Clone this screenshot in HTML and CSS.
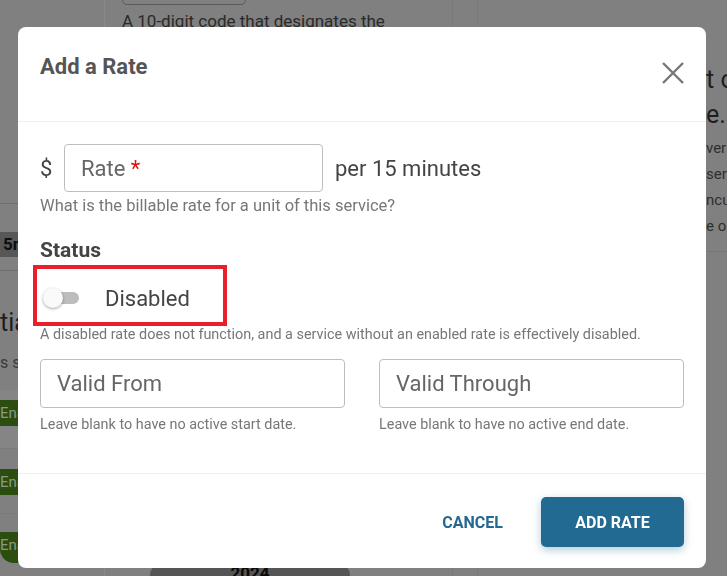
FILE: index.html
```html
<!DOCTYPE html>
<html>
<head>
<meta charset="utf-8">
<link rel="stylesheet" href="styles.css">
</head>
<body>
<div class="page">
  <div class="col col-left">
    <div class="l-line l-line1"></div>
    <div class="chip-gray">5n</div>
    <div class="l-line l-line2"></div>
    <div class="l-big">tia</div>
    <div class="l-small">s s</div>
    <div class="band"><div class="chip-green">Ena</div></div>
    <div class="l-line l-line3"></div>
    <div class="chip-green chip-g2">Ena</div>
    <div class="l-line l-line4"></div>
    <div class="chip-green chip-g3">Ena</div>
  </div>
  <div class="col col-mid">
    <div class="m-input"></div>
    <div class="m-text">A 10-digit code that designates the</div>
    <div class="m-spacer"></div>
    <div class="pill-year">2024</div>
  </div>
  <div class="col col-gap"></div>
  <div class="col col-right">
    <div class="r-big">t o</div>
    <div class="r-big">e.</div>
    <div class="r-small">ver</div>
    <div class="r-small">serv</div>
    <div class="r-small">ncu</div>
    <div class="r-small">e o</div>
    <div class="r-line"></div>
  </div>
</div>

<div class="modal">
  <div class="modal-header">
    <h2 class="modal-title">Add a Rate</h2>
    <button class="close-btn" aria-label="Close">
      <svg width="22" height="22" viewBox="0 0 22 22"><path d="M1 1 L21 21 M21 1 L1 21" stroke="#777" stroke-width="2.4" fill="none"/></svg>
    </button>
  </div>
  <div class="modal-body">
    <div class="rate-row">
      <span class="dollar">$</span>
      <div class="field rate-field"><span class="ph">Rate <span class="req">*</span></span></div>
      <span class="unit">per 15 minutes</span>
    </div>
    <p class="help help-rate">What is the billable rate for a unit of this service?</p>
    <h3 class="status-title">Status</h3>
    <div class="highlight">
      <div class="toggle"><span class="track"></span><span class="thumb"></span></div>
      <span class="toggle-label">Disabled</span>
    </div>
    <p class="help help-status">A disabled rate does not function, and a service without an enabled rate is effectively disabled.</p>
    <div class="dates">
      <div class="date-col">
        <div class="field date-field"><span class="ph">Valid From</span></div>
        <p class="help help-date">Leave blank to have no active start date.</p>
      </div>
      <div class="date-col">
        <div class="field date-field"><span class="ph">Valid Through</span></div>
        <p class="help help-date">Leave blank to have no active end date.</p>
      </div>
    </div>
  </div>
  <div class="modal-footer">
    <button class="btn-cancel">CANCEL</button>
    <button class="btn-add">ADD RATE</button>
  </div>
</div>
</body>
</html>
```

FILE: styles.css
```css
* { box-sizing: border-box; }
html, body { margin: 0; padding: 0; }
body {
  width: 727px;
  height: 576px;
  overflow: hidden;
  background: #808080;
  font-family: Roboto, "Liberation Sans", Arial, sans-serif;
}

/* dimmed background page */
.page {
  display: flex;
  height: 576px;
  overflow: hidden;
}
.col { height: 100%; }
.col-left { width: 105px; border-right: 1px solid #8a8a8a; }
.col-mid { width: 347px; padding-left: 17px; display: flex; flex-direction: column; }
.col-gap { width: 26px; border-left: 1px solid #7a7a7a; border-right: 1px solid #7a7a7a; }
.col-right { flex: 1; padding-left: 228px; white-space: nowrap; overflow: hidden; }

.l-line { height: 1px; background: #6e6e6e; }
.l-line1 { margin-top: 203px; }
.chip-gray {
  margin-top: 28px; height: 25px; width: 60px; background: #575757;
  color: #0d0d0d; font-weight: 700; font-size: 17px; line-height: 25px; padding-left: 3px;
}
.l-line2 { margin-top: 13px; }
.l-big { margin-top: 38px; font-size: 25px; color: #1e1e1e; line-height: 28px; }
.l-small { margin-top: 16px; font-size: 16px; color: #3a3a3a; line-height: 20px; }
.band { margin-top: 17px; height: 58px; background: #858585; padding-top: 10px; }
.chip-green {
  height: 26px; width: 70px; background: #2b4d10; border-radius: 0 13px 13px 0;
  color: #8a9a80; font-size: 15px; line-height: 26px; padding-left: 0;
}
.l-line3 { margin-top: 0; background: #7a7a7a; }
.chip-g2 { margin-top: 20px; }
.l-line4 { margin-top: 18px; background: #7a7a7a; }
.chip-g3 { margin-top: 18px; height: 31px; width: 75px; border-radius: 0 14px 14px 14px; }

.m-input { margin-top: -10px; width: 124px; height: 15px; border: 1px solid #5a5a5a; border-radius: 5px; }
.m-text { margin-top: 5px; font-size: 17px; color: #2a2a2a; line-height: 22px; margin-left: 0; }
.m-spacer { flex: 1; }
.pill-year {
  margin-left: 28px; margin-bottom: -14px; width: 200px; height: 28px; background: #555;
  border-radius: 14px; color: #0a0a0a; font-weight: 700; font-size: 17px; text-align: center; line-height: 22px;
}

.r-big { font-size: 25px; color: #1e1e1e; line-height: 35px; }
.r-big:first-child { margin-top: 62px; }
.r-small { font-size: 15px; color: #2e2e2e; line-height: 26px; }
.r-small:nth-of-type(3) { margin-top: 3px; }
.r-line { margin-top: 12px; height: 1px; background: #767676; }

/* modal */
.modal {
  position: fixed;
  left: 18px;
  top: 27px;
  width: 688px;
  height: 541px;
  background: #fff;
  border-radius: 8px;
  display: flex;
  flex-direction: column;
}
.modal-header {
  height: 95px;
  border-bottom: 1px solid #eeeeee;
  padding: 0 22px;
  display: flex;
  justify-content: space-between;
  align-items: flex-start;
}
.modal-title {
  margin: 27px 0 0 0;
  font-size: 22px;
  font-weight: 700;
  color: #555;
  line-height: 26px;
}
.close-btn {
  margin-top: 35px;
  padding: 0;
  border: 0;
  background: none;
  width: 22px;
  height: 22px;
  display: block;
}
.close-btn svg { display: block; }

.modal-body {
  flex: 1;
  padding: 22px 22px 0 22px;
  color: #444;
}
.rate-row { display: flex; align-items: center; }
.dollar { font-size: 22px; width: 24px; color: #444; }
.field {
  height: 48px;
  border: 1px solid #bdbdbd;
  border-radius: 4px;
  display: flex;
  align-items: center;
  padding-left: 16px;
  background: #fff;
}
.date-field { height: 49px; }
.rate-field { width: 259px; }
.ph { font-size: 22px; color: #666; }
.req { color: #e01010; }
.unit { margin-left: 12px; font-size: 22px; color: #444; }

.help { margin: 0; color: #777; }
.help-rate { margin-top: 4px; font-size: 16.5px; line-height: 19px; }
.status-title {
  margin: 23px 0 0 0;
  font-size: 21px;
  font-weight: 700;
  color: #444;
  line-height: 24px;
}
.highlight {
  margin: 3px 0 0 -7px;
  width: 194px;
  height: 61px;
  border: 4px solid #e8202a;
  display: flex;
  align-items: center;
  padding: 5px 0 0 6px;
}
.toggle { position: relative; width: 36px; height: 20px; }
.track {
  position: absolute; left: 6px; top: 4px; width: 30px; height: 12px;
  background: #bdbdbd; border-radius: 6px;
}
.thumb {
  position: absolute; left: 0; top: 0; width: 20px; height: 20px; border-radius: 50%;
  background: #fafafa; box-shadow: 0 1px 3px rgba(0,0,0,0.35);
}
.toggle-label { margin-left: 26px; font-size: 22px; color: #444; }
.help-status { margin-top: 0; font-size: 14.4px; line-height: 17px; }

.dates { display: flex; gap: 34px; margin-top: 16px; }
.date-col { flex: 1; }
.help-date { margin-top: 8px; font-size: 14.4px; line-height: 17px; }

.modal-footer {
  height: 95px;
  border-top: 1px solid #eeeeee;
  display: flex;
  justify-content: flex-end;
  align-items: flex-start;
  padding: 23px 22px 0 0;
  gap: 22px;
}
.btn-cancel {
  height: 50px;
  padding: 0 16px;
  border: 0;
  background: none;
  color: #24698f;
  font-family: Roboto, "Liberation Sans", Arial, sans-serif;
  font-size: 16px;
  font-weight: 700;
}
.btn-add {
  width: 143px;
  height: 50px;
  border: 0;
  border-radius: 5px;
  background: #236a93;
  color: #fff;
  font-family: Roboto, "Liberation Sans", Arial, sans-serif;
  font-size: 16px;
  font-weight: 700;
  box-shadow: 0 3px 8px rgba(35,106,147,0.35);
}
```
